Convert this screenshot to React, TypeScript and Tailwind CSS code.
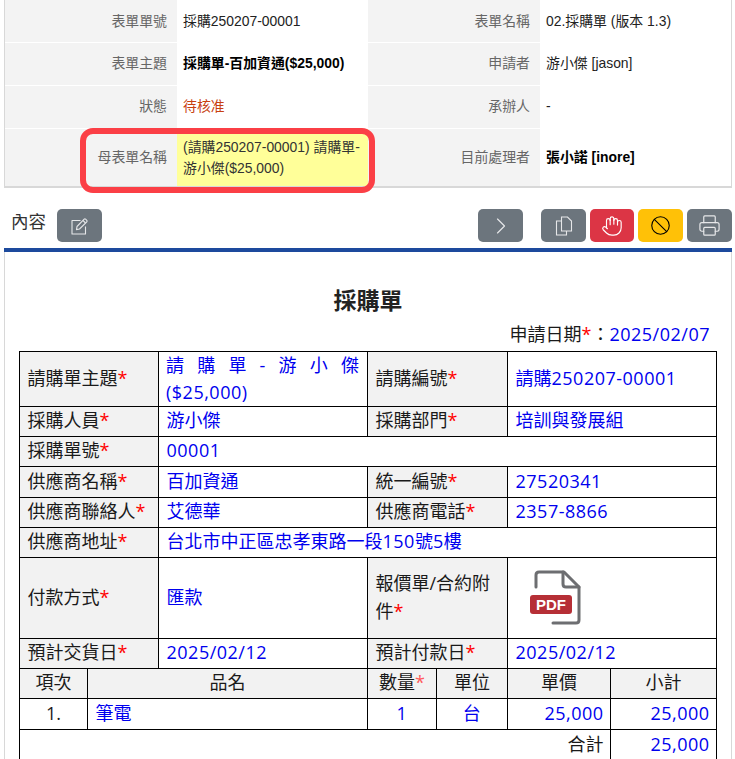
import React from 'react'
import { ChevronRight, Hand, Ban, Printer } from 'lucide-react'

const sans = { fontFamily: '"Liberation Sans", "Noto Sans CJK TC", sans-serif' }

const Star = () => <span className="text-[#ff0000]">*</span>

// digits in the form are a little wider than Open Sans
const Num = ({ children }: { children: React.ReactNode }) => <span className="tracking-[0.5px]">{children}</span>

const InfoRow = ({ pad = '', a, b, c, d }: { pad?: string; a: string; b: React.ReactNode; c: string; d: React.ReactNode }) => (
  <div className="flex h-[43px] border-b border-white">
    <div className={`w-[172px] bg-[#f3f3f3] flex items-center justify-end pr-[10px] text-[#666] ${pad}`}>{a}</div>
    <div className={`w-[191px] flex items-center pl-[6px] pr-[4px] text-[#222] ${pad}`}>{b}</div>
    <div className={`w-[172px] bg-[#f3f3f3] flex items-center justify-end pr-[10px] text-[#666] ${pad}`}>{c}</div>
    <div className={`w-[191px] flex items-center pl-[6px] text-[#222] ${pad}`}>{d}</div>
  </div>
)

const Btn = ({ color, w = 'w-[45px]', children }: { color: string; w?: string; children: React.ReactNode }) => (
  <button className={`${w} h-[33px] rounded-[5px] flex items-center justify-center ${color}`}>{children}</button>
)

const EditIcon = () => (
  <svg width="18" height="18" viewBox="0 0 18 18" fill="none" stroke="currentColor" strokeWidth="1.1" strokeLinejoin="round">
    <path d="M9.5 3.5H1v13.5h13.5V9.5" />
    <path d="M6 9.5 13.2 2.2a1 1 0 0 1 1.4 0l1.2 1.2a1 1 0 0 1 0 1.4L8.5 12l-3 .6z" />
    <path d="M12 3.5 14.5 6" />
  </svg>
)

const CopyIcon = () => (
  <svg width="18" height="20" viewBox="0 0 18 20" fill="none" stroke="currentColor" strokeWidth="1.1">
    <path d="M6.5 1h6l4 4v10h-10z" />
    <path d="M6.5 5H1.5v14h10v-4" />
  </svg>
)

const PdfIcon = () => (
  <svg width="52" height="56" viewBox="0 0 52 56">
    <g fill="none" stroke="#6d6e71" strokeWidth="3" strokeLinecap="round" strokeLinejoin="round">
      <path d="M6 18V6q0-3 3-3h25l15 15v33q0 3-3 3H23" />
      <path d="M33 3v12q0 3 3 3h13" />
    </g>
    <rect x="0" y="26" width="42" height="19" rx="3" fill="#b62f36" />
    <text x="21" y="41" textAnchor="middle" fill="#fff" fontSize="15" fontWeight="700" fontFamily="Liberation Sans, sans-serif">PDF</text>
  </svg>
)

const th = 'border border-black bg-[#f2f2f2] pl-[7.5px] pr-[8px] pb-[2px] text-[#1a1a1a] font-normal text-left'
const td = 'border border-black pl-[7.5px] pr-[8px] pb-[2px] text-[#0000ee]'
const tdNum = 'border border-black pl-[7.5px] pr-[6.5px] pb-[2px] text-[#0000ee] text-right'
const hc = 'border border-black bg-[#f2f2f2] text-[#1a1a1a] font-normal text-center px-0 pb-[2px]'

export default function App() {
  return (
    <div className="h-[759px] w-[735px] overflow-hidden bg-white relative">
      <div className="ml-[4px] w-[728px] border-x border-b-2 border-[#d8d8d8] text-[13.9px]" style={sans}>
        <InfoRow a="表單單號" b="採購250207-00001" c="表單名稱" d="02.採購單 (版本 1.3)" />
        <InfoRow pad="pb-[2px]" a="表單主題" b={<b className="text-black">採購單-百加資通($25,000)</b>} c="申請者" d="游小傑 [jason]" />
        <InfoRow pad="pb-[2px]" a="狀態" b={<span className="text-[#c8400f]">待核准</span>} c="承辦人" d="-" />
        <div className="flex h-[57px]">
          <div className="w-[172px] bg-[#f3f3f3] flex items-center justify-end pr-[10px] text-[#666]">母表單名稱</div>
          <div className="w-[191px] bg-[#ffff99] flex items-center pl-[6px] pr-[4px] text-[#333] leading-[21px]">(請購250207-00001) 請購單-游小傑($25,000)</div>
          <div className="w-[172px] bg-[#f3f3f3] flex items-center justify-end pr-[10px] text-[#666]">目前處理者</div>
          <div className="w-[191px] flex items-center pl-[6px]"><b className="text-black">張小諾 [inore]</b></div>
        </div>
      </div>

      {/* 紅框標示 */}
      <div className="absolute left-[80px] top-[128px] w-[295px] h-[65px] border-[6px] border-[#fb3f46] rounded-[13px]" />

      <div className="flex items-center h-[33px] mt-[21px] ml-[11px] mr-[3px]" style={{ fontFamily: '"Open Sans", "Noto Sans CJK TC", sans-serif' }}>
        <span className="text-[17.5px] text-[#333] w-[46px] -mt-[8px]">內容</span>
        <Btn color="bg-[#6c757d] text-[#e6e7e9]"><EditIcon /></Btn>
        <div className="flex-1" />
        <Btn color="bg-[#6c757d] text-[#e6e7e9]"><ChevronRight size={28} strokeWidth={1} /></Btn>
        <div className="w-[18px]" />
        <div className="flex gap-[4px]">
          <Btn color="bg-[#6c757d] text-[#e6e7e9]"><CopyIcon /></Btn>
          <Btn w="w-[44px]" color="bg-[#dc3545] text-white"><Hand size={22} strokeWidth={1.25} /></Btn>
          <Btn color="bg-[#ffc107] text-black"><Ban size={21} strokeWidth={1.25} /></Btn>
          <Btn color="bg-[#6c757d] text-[#e6e7e9]"><Printer size={23} strokeWidth={1.25} /></Btn>
        </div>
      </div>

      <div className="ml-[4px] w-[728px] mt-[6px] border-t-[4px] border-[#1d4a9d]">
        <div className="border-x border-[#d8d8d8] pl-[14px] pr-[14px]" style={{ fontFamily: '"Open Sans", "Noto Sans CJK TC", sans-serif' }}>
          <h1 className="text-center text-[23px] font-bold text-[#222] leading-[30px] pt-[33px]">採購單</h1>
          <div className="text-right text-[18px] leading-[24px] h-[36px] pt-[7px] pr-[7px] text-[#1a1a1a]">
            申請日期<Star />：<span className="text-[#0000ee]"><Num>2025/02/07</Num></span>
          </div>
          <table className="table-fixed border-collapse w-[697px] text-[18px] leading-[27px]">
            <colgroup>
              <col className="w-[68px]" />
              <col className="w-[71px]" />
              <col className="w-[209px]" />
              <col className="w-[69px]" />
              <col className="w-[71px]" />
              <col className="w-[103px]" />
              <col className="w-[106px]" />
            </colgroup>
            <tbody>
              <tr className="h-[55px]">
                <th colSpan={2} className={th}>請購單主題<Star /></th>
                <td className="border border-black pl-[7px] pr-[8px] text-[#0000ee]">
                  <div className="text-justify [text-align-last:justify]">請購單-游小傑</div>
                  <div><Num>($25,000)</Num></div>
                </td>
                <th colSpan={2} className={th}>請購編號<Star /></th>
                <td colSpan={2} className={td}>請購<Num>250207-00001</Num></td>
              </tr>
              <tr className="h-[30px]">
                <th colSpan={2} className={th}>採購人員<Star /></th>
                <td className={td}>游小傑</td>
                <th colSpan={2} className={th}>採購部門<Star /></th>
                <td colSpan={2} className={td}>培訓與發展組</td>
              </tr>
              <tr className="h-[30px]">
                <th colSpan={2} className={th}>採購單號<Star /></th>
                <td colSpan={5} className={td}><Num>00001</Num></td>
              </tr>
              <tr className="h-[31px]">
                <th colSpan={2} className={th}>供應商名稱<Star /></th>
                <td className={td}>百加資通</td>
                <th colSpan={2} className={th}>統一編號<Star /></th>
                <td colSpan={2} className={td}><Num>27520341</Num></td>
              </tr>
              <tr className="h-[30px]">
                <th colSpan={2} className={th}>供應商聯絡人<Star /></th>
                <td className={td}>艾德華</td>
                <th colSpan={2} className={th}>供應商電話<Star /></th>
                <td colSpan={2} className={td}><Num>2357-8866</Num></td>
              </tr>
              <tr className="h-[30px]">
                <th colSpan={2} className={th}>供應商地址<Star /></th>
                <td colSpan={5} className={td}>台北市中正區忠孝東路一段<Num>150</Num>號<Num>5</Num>樓</td>
              </tr>
              <tr className="h-[81px]">
                <th colSpan={2} className={th}>付款方式<Star /></th>
                <td className={td}>匯款</td>
                <th colSpan={2} className={`${th} leading-[28px]`}>報價單/合約附件<Star /></th>
                <td colSpan={2} className={`${td} pl-[22px]`}><PdfIcon /></td>
              </tr>
              <tr className="h-[30px]">
                <th colSpan={2} className={th}>預計交貨日<Star /></th>
                <td className={td}><Num>2025/02/12</Num></td>
                <th colSpan={2} className={th}>預計付款日<Star /></th>
                <td colSpan={2} className={td}><Num>2025/02/12</Num></td>
              </tr>
              <tr className="h-[30px]">
                <th className={hc}>項次</th>
                <th colSpan={2} className={hc}>品名</th>
                <th className={hc}>數量<span className="text-[#ff5a5a]">*</span></th>
                <th className={hc}>單位</th>
                <th className={hc}>單價</th>
                <th className={hc}>小計</th>
              </tr>
              <tr className="h-[31px]">
                <td className="border border-black text-center text-[#1a1a1a] pb-[2px]">1.</td>
                <td colSpan={2} className={td}>筆電</td>
                <td className={`${td} text-center`}>1</td>
                <td className={`${td} text-center`}>台</td>
                <td className={tdNum}><Num>25,000</Num></td>
                <td className={tdNum}><Num>25,000</Num></td>
              </tr>
              <tr className="h-[31px]">
                <td colSpan={6} className="border border-black pl-[7px] pr-[6.5px] pb-[2px] text-right text-[#1a1a1a]">合計</td>
                <td className={tdNum}><Num>25,000</Num></td>
              </tr>
            </tbody>
          </table>
        </div>
      </div>
    </div>
  )
}
